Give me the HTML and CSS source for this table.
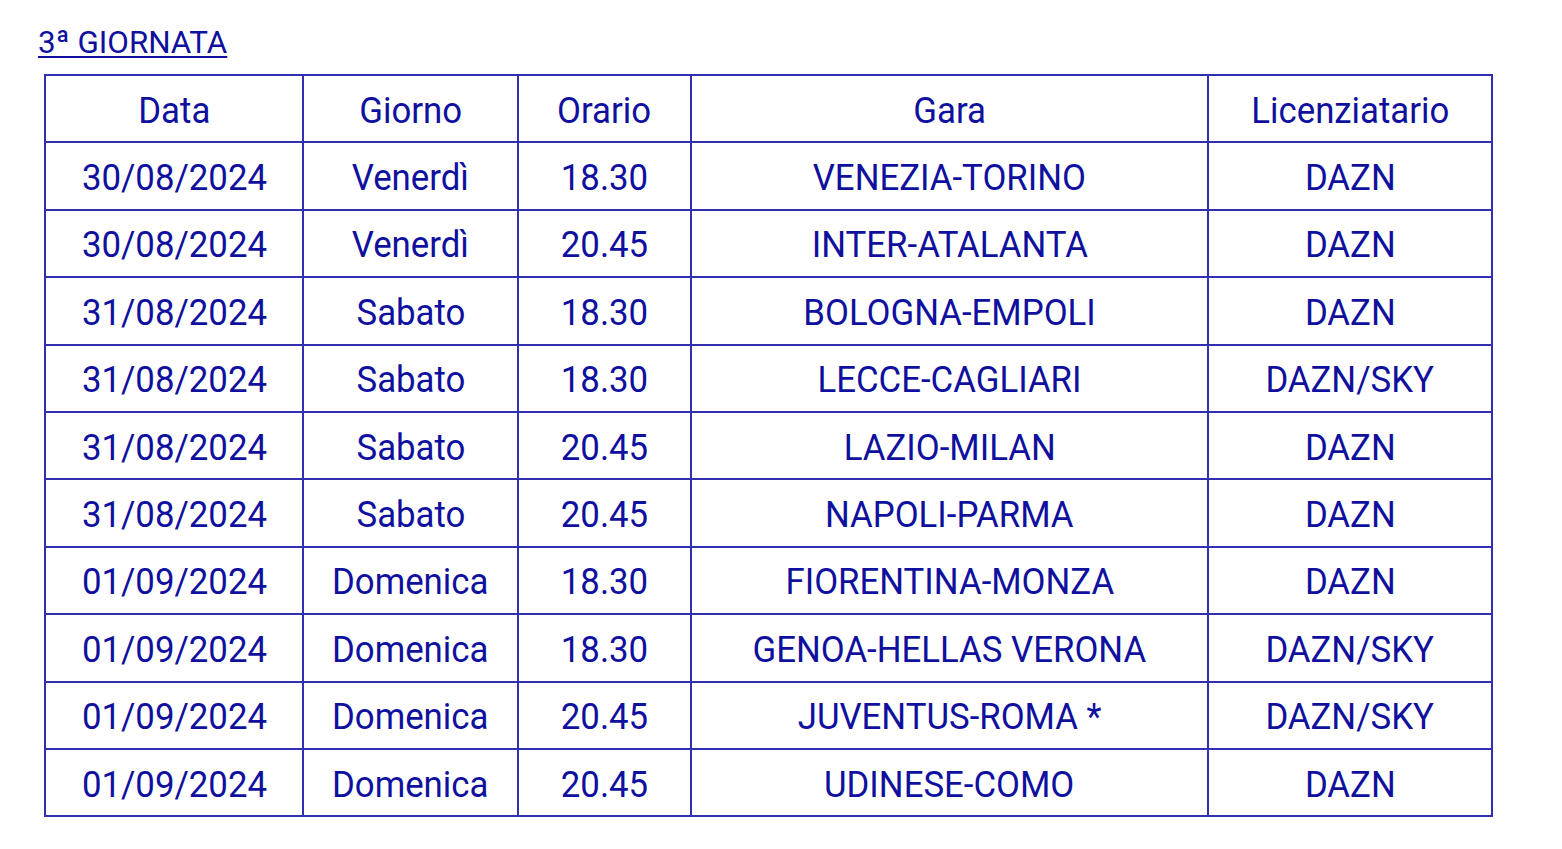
FILE: index.html
```html
<!DOCTYPE html>
<html lang="it">
<head>
<meta charset="utf-8">
<title>3ª Giornata</title>
<link rel="stylesheet" href="styles.css">
</head>
<body>
<div class="page">
  <a class="title" href="#">3ª GIORNATA</a>
  <table class="sched">
    <colgroup>
      <col class="c1"><col class="c2"><col class="c3"><col class="c4"><col class="c5">
    </colgroup>
    <thead>
      <tr><th><span class="t">Data</span></th><th><span class="t">Giorno</span></th><th><span class="t">Orario</span></th><th><span class="t">Gara</span></th><th><span class="t">Licenziatario</span></th></tr>
    </thead>
    <tbody>
      <tr><td><span class="t">30/08/2024</span></td><td><span class="t">Venerdì</span></td><td><span class="t">18.30</span></td><td><span class="t">VENEZIA-TORINO</span></td><td><span class="t">DAZN</span></td></tr>
      <tr><td><span class="t">30/08/2024</span></td><td><span class="t">Venerdì</span></td><td><span class="t">20.45</span></td><td><span class="t">INTER-ATALANTA</span></td><td><span class="t">DAZN</span></td></tr>
      <tr><td><span class="t">31/08/2024</span></td><td><span class="t">Sabato</span></td><td><span class="t">18.30</span></td><td><span class="t">BOLOGNA-EMPOLI</span></td><td><span class="t">DAZN</span></td></tr>
      <tr><td><span class="t">31/08/2024</span></td><td><span class="t">Sabato</span></td><td><span class="t">18.30</span></td><td><span class="t">LECCE-CAGLIARI</span></td><td><span class="t">DAZN/SKY</span></td></tr>
      <tr><td><span class="t">31/08/2024</span></td><td><span class="t">Sabato</span></td><td><span class="t">20.45</span></td><td><span class="t">LAZIO-MILAN</span></td><td><span class="t">DAZN</span></td></tr>
      <tr><td><span class="t">31/08/2024</span></td><td><span class="t">Sabato</span></td><td><span class="t">20.45</span></td><td><span class="t">NAPOLI-PARMA</span></td><td><span class="t">DAZN</span></td></tr>
      <tr><td><span class="t">01/09/2024</span></td><td><span class="t">Domenica</span></td><td><span class="t">18.30</span></td><td><span class="t">FIORENTINA-MONZA</span></td><td><span class="t">DAZN</span></td></tr>
      <tr><td><span class="t">01/09/2024</span></td><td><span class="t">Domenica</span></td><td><span class="t">18.30</span></td><td><span class="t">GENOA-HELLAS VERONA</span></td><td><span class="t">DAZN/SKY</span></td></tr>
      <tr><td><span class="t">01/09/2024</span></td><td><span class="t">Domenica</span></td><td><span class="t">20.45</span></td><td><span class="t">JUVENTUS-ROMA *</span></td><td><span class="t">DAZN/SKY</span></td></tr>
      <tr><td><span class="t">01/09/2024</span></td><td><span class="t">Domenica</span></td><td><span class="t">20.45</span></td><td><span class="t">UDINESE-COMO</span></td><td><span class="t">DAZN</span></td></tr>
    </tbody>
  </table>
</div>
</body>
</html>
```

FILE: styles.css
```css
html, body {
  margin: 0;
  padding: 0;
  background: #ffffff;
}
.page {
  padding: 22px 0 0 38px;
  font-family: Roboto, "Liberation Sans", sans-serif;
  color: #10109e;
}
.title {
  display: inline-block;
  font-size: 32px;
  line-height: 40px;
  color: #10109e;
  text-decoration: underline;
  text-decoration-thickness: 2px;
  text-underline-offset: 3px;
  transform: scaleX(0.98);
  transform-origin: left center;
}
.sched {
  margin: 12px 0 0 6px;
  border-collapse: collapse;
  table-layout: fixed;
  width: 1447px;
}
.c1 { width: 258px; }
.c2 { width: 215px; }
.c3 { width: 173px; }
.c4 { width: 517px; }
.c5 { width: 284px; }
.sched th, .sched td {
  border: 2px solid #2f2fb0;
  height: 67.4px;
  padding: 4px 0 0;
  box-sizing: border-box;
  text-align: center;
  vertical-align: middle;
  font-weight: 400;
  font-size: 37px;
  line-height: 40px;
  white-space: nowrap;
}
.t {
  display: inline-block;
  transform: scaleX(0.94);
  transform-origin: center center;
}
```
